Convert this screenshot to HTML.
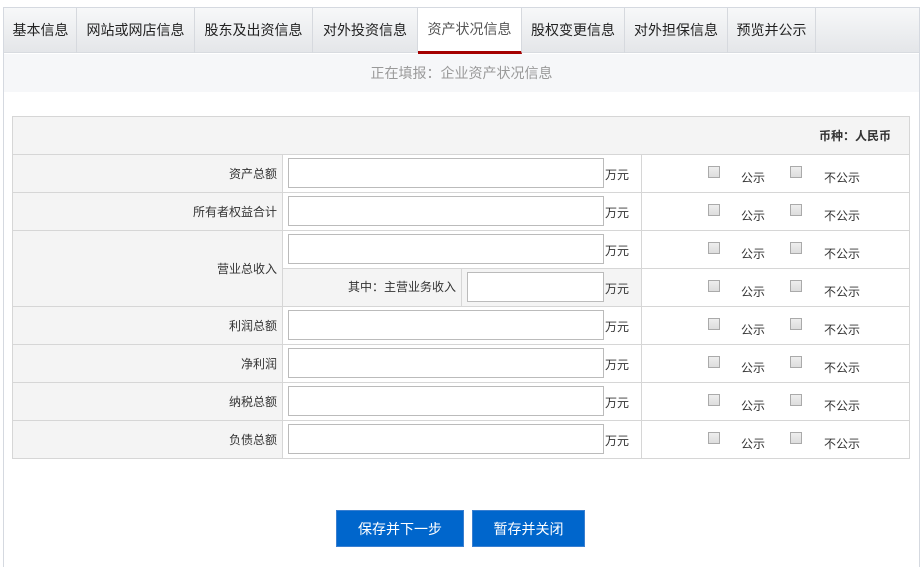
<!DOCTYPE html>
<html><head><meta charset="utf-8"><style>
*{margin:0;padding:0;box-sizing:border-box}
body{width:923px;height:554px;background:#fff;font-family:"Liberation Sans","Noto Sans CJK SC",sans-serif;font-size:13px;color:#333;position:relative;overflow:hidden}
.frame{position:absolute;left:3px;top:7px;width:917px;height:560px;border:1px solid #d5d9e0;border-bottom:none}
.tabs{position:absolute;left:4px;top:8px;width:915px;height:45px;background:linear-gradient(#f7f8f9,#e4e6e9);border-bottom:1px solid #d8dbe0}
.tab{position:absolute;top:0;height:45px;line-height:45px;text-align:center;font-size:14px;color:#222;border-right:1px solid #d6d9de}
.tab.act{background:#fff;color:#555;border-bottom:3px solid #a40000;height:46px;line-height:43px}
.sub{position:absolute;left:4px;top:54px;width:915px;height:38px;background:#f6f7f9;text-align:center;line-height:38px;color:#999;font-size:14px}
table{position:absolute;left:12px;top:116px;border-collapse:collapse;width:898px}
td{border:1px solid #d6d6d6;height:38px;padding:0}
.h{background:#f4f4f4;text-align:right;font-weight:bold;font-size:12px;padding-right:18px}
.l{background:#f4f4f4;text-align:right;padding-right:5px;width:270px;font-size:12px}
.in{width:359px;position:relative}
.box{position:absolute;left:5px;top:3px;width:316px;height:30px;border:1px solid #bbb;background:#fff}
.u{position:absolute;left:322px;top:11px;font-size:12px}
.ck{position:relative}
.cb{position:absolute;top:11px;width:12px;height:12px;border:1px solid #aaa;background:linear-gradient(#eee,#ddd)}
.t{position:absolute;top:14px;font-size:12px}
.btn{position:absolute;top:510px;height:37px;background:#0066cc;color:#fff;text-align:center;line-height:37px;font-size:14px;border:1px solid #3a7fd0}
</style></head><body>
<div class="frame"></div>
<div class="tabs">
<div class="tab" style="left:1px;width:72px">基本信息</div>
<div class="tab" style="left:73px;width:118px">网站或网店信息</div>
<div class="tab" style="left:191px;width:118px">股东及出资信息</div>
<div class="tab" style="left:309px;width:105px">对外投资信息</div>
<div class="tab act" style="left:414px;width:104px">资产状况信息</div>
<div class="tab" style="left:518px;width:103px">股权变更信息</div>
<div class="tab" style="left:621px;width:103px">对外担保信息</div>
<div class="tab" style="left:724px;width:88px">预览并公示</div>
</div>
<div class="sub">正在填报：企业资产状况信息</div>
<table>
<tr><td colspan="3" class="h">币种：人民币</td></tr>
<tr><td class="l">资产总额</td><td class="in"><div class="box"></div><span class="u">万元</span></td><td class="ck"><i class="cb" style="left:66px"></i><span class="t" style="left:99px">公示</span><i class="cb" style="left:148px"></i><span class="t" style="left:182px">不公示</span></td></tr>
<tr><td class="l">所有者权益合计</td><td class="in"><div class="box"></div><span class="u">万元</span></td><td class="ck"><i class="cb" style="left:66px"></i><span class="t" style="left:99px">公示</span><i class="cb" style="left:148px"></i><span class="t" style="left:182px">不公示</span></td></tr>
<tr><td class="l" rowspan="2">营业总收入</td><td class="in"><div class="box"></div><span class="u">万元</span></td><td class="ck"><i class="cb" style="left:66px"></i><span class="t" style="left:99px">公示</span><i class="cb" style="left:148px"></i><span class="t" style="left:182px">不公示</span></td></tr>
<tr><td class="in" style="background:#f4f4f4"><div style="position:absolute;left:0;top:0;width:179px;height:37px;border-right:1px solid #d6d6d6;text-align:right;padding-right:5px;line-height:37px;font-size:12px">其中：主营业务收入</div><div class="box" style="left:184px;width:137px"></div><span class="u">万元</span></td><td class="ck"><i class="cb" style="left:66px"></i><span class="t" style="left:99px">公示</span><i class="cb" style="left:148px"></i><span class="t" style="left:182px">不公示</span></td></tr>
<tr><td class="l">利润总额</td><td class="in"><div class="box"></div><span class="u">万元</span></td><td class="ck"><i class="cb" style="left:66px"></i><span class="t" style="left:99px">公示</span><i class="cb" style="left:148px"></i><span class="t" style="left:182px">不公示</span></td></tr>
<tr><td class="l">净利润</td><td class="in"><div class="box"></div><span class="u">万元</span></td><td class="ck"><i class="cb" style="left:66px"></i><span class="t" style="left:99px">公示</span><i class="cb" style="left:148px"></i><span class="t" style="left:182px">不公示</span></td></tr>
<tr><td class="l">纳税总额</td><td class="in"><div class="box"></div><span class="u">万元</span></td><td class="ck"><i class="cb" style="left:66px"></i><span class="t" style="left:99px">公示</span><i class="cb" style="left:148px"></i><span class="t" style="left:182px">不公示</span></td></tr>
<tr><td class="l">负债总额</td><td class="in"><div class="box"></div><span class="u">万元</span></td><td class="ck"><i class="cb" style="left:66px"></i><span class="t" style="left:99px">公示</span><i class="cb" style="left:148px"></i><span class="t" style="left:182px">不公示</span></td></tr>
</table>
<div class="btn" style="left:336px;width:128px">保存并下一步</div>
<div class="btn" style="left:472px;width:113px">暂存并关闭</div>
</body></html>
